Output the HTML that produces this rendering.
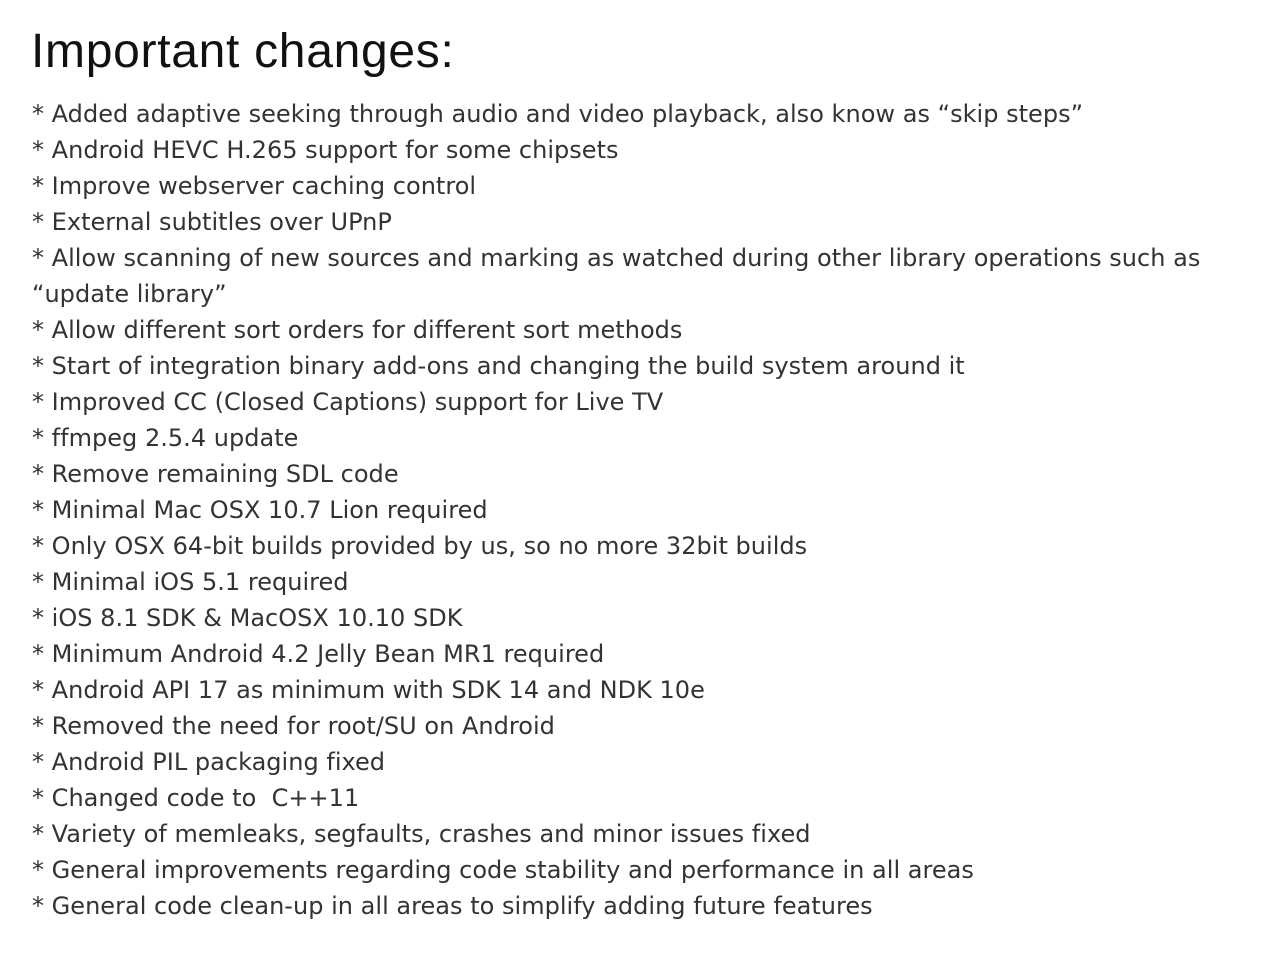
<!DOCTYPE html>
<html><head><meta charset="utf-8"><style>
html,body{margin:0;padding:0;background:#fff;width:1264px;height:970px;overflow:hidden}
h1{position:absolute;left:31px;top:22px;margin:0;font:400 48px/60px "Liberation Sans",sans-serif;color:#111;letter-spacing:0.7px}
.t{position:absolute;left:32px;top:96px;font:400 24px/36px "DejaVu Sans","Liberation Sans",sans-serif;color:#333;white-space:pre;letter-spacing:0.02px}
</style></head><body>
<h1>Important changes:</h1>
<div class="t">* Added adaptive seeking through audio and video playback, also know as “skip steps”
* Android HEVC H.265 support for some chipsets
* Improve webserver caching control
* External subtitles over UPnP
* Allow scanning of new sources and marking as watched during other library operations such as
“update library”
* Allow different sort orders for different sort methods
* Start of integration binary add-ons and changing the build system around it
* Improved CC (Closed Captions) support for Live TV
* ffmpeg 2.5.4 update
* Remove remaining SDL code
* Minimal Mac OSX 10.7 Lion required
* Only OSX 64-bit builds provided by us, so no more 32bit builds
* Minimal iOS 5.1 required
* iOS 8.1 SDK &amp; MacOSX 10.10 SDK
* Minimum Android 4.2 Jelly Bean MR1 required
* Android API 17 as minimum with SDK 14 and NDK 10e
* Removed the need for root/SU on Android
* Android PIL packaging fixed
* Changed code to  C++11
* Variety of memleaks, segfaults, crashes and minor issues fixed
* General improvements regarding code stability and performance in all areas
* General code clean-up in all areas to simplify adding future features</div>
</body></html>
